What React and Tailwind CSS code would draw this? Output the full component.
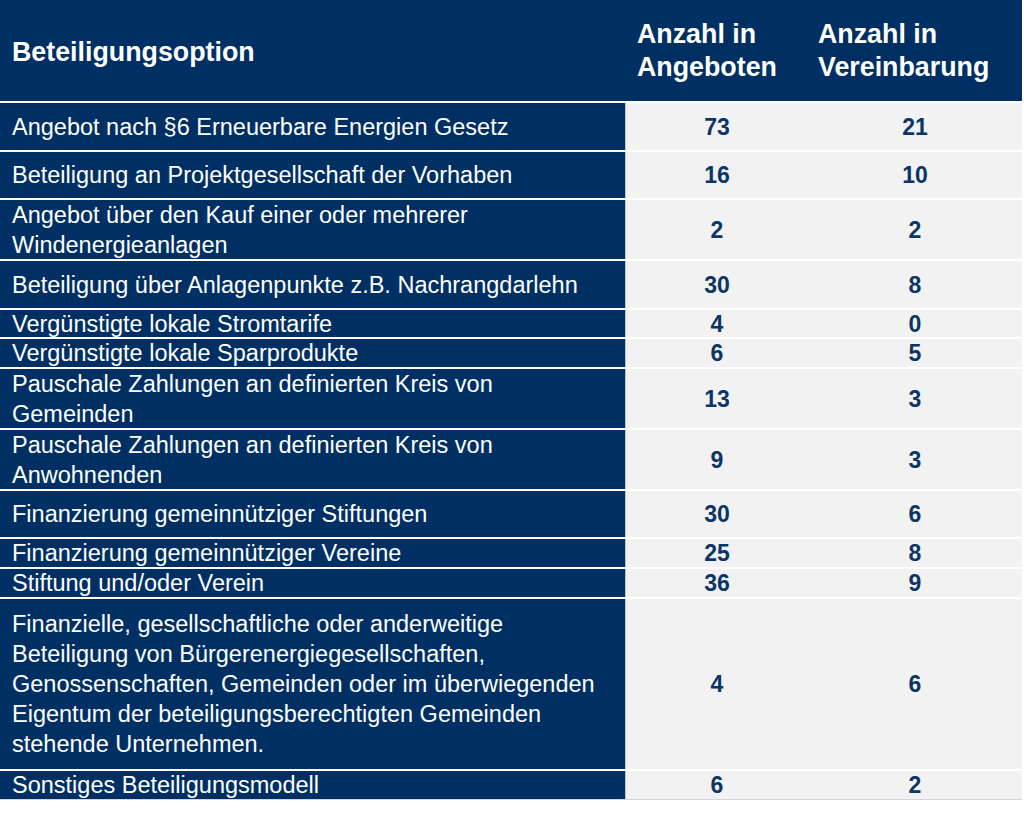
const rows = [
  { label: ['Angebot nach §6 Erneuerbare Energien Gesetz'], a: 73, b: 21, h: 'h-[49px]' },
  { label: ['Beteiligung an Projektgesellschaft der Vorhaben'], a: 16, b: 10, h: 'h-[48px]' },
  { label: ['Angebot über den Kauf einer oder mehrerer', 'Windenergieanlagen'], a: 2, b: 2, h: 'h-[61px]' },
  { label: ['Beteiligung über Anlagenpunkte z.B. Nachrangdarlehn'], a: 30, b: 8, h: 'h-[49px]' },
  { label: ['Vergünstigte lokale Stromtarife'], a: 4, b: 0, h: 'h-[29px]' },
  { label: ['Vergünstigte lokale Sparprodukte'], a: 6, b: 5, h: 'h-[30px]' },
  { label: ['Pauschale Zahlungen an definierten Kreis von', 'Gemeinden'], a: 13, b: 3, h: 'h-[61px]' },
  { label: ['Pauschale Zahlungen an definierten Kreis von', 'Anwohnenden'], a: 9, b: 3, h: 'h-[61px]' },
  { label: ['Finanzierung gemeinnütziger Stiftungen'], a: 30, b: 6, h: 'h-[48px]' },
  { label: ['Finanzierung gemeinnütziger Vereine'], a: 25, b: 8, h: 'h-[30px]' },
  { label: ['Stiftung und/oder Verein'], a: 36, b: 9, h: 'h-[30px]' },
  {
    label: [
      'Finanzielle, gesellschaftliche oder anderweitige',
      'Beteiligung von Bürgerenergiegesellschaften,',
      'Genossenschaften, Gemeinden oder im überwiegenden',
      'Eigentum der beteiligungsberechtigten Gemeinden',
      'stehende Unternehmen.',
    ],
    a: 4,
    b: 6,
    h: 'h-[172px]',
  },
  { label: ['Sonstiges Beteiligungsmodell'], a: 6, b: 2, h: 'h-[30px]' },
];

export default function App() {
  return (
    <div className="min-h-[813px] bg-white font-['Liberation_Sans',Arial,sans-serif]">
      <div className="w-[1022px]">
        {/* header */}
        <div className="flex h-[101px] bg-[#003063] text-white font-bold text-[26.8px] leading-[33px]">
          <div className="w-[626px] flex items-center pl-[12px] pt-[3px]">Beteiligungsoption</div>
          <div className="w-[182px] flex items-center pl-[11px] pt-[1px]">
            <div>
              Anzahl in
              <br />
              Angeboten
            </div>
          </div>
          <div className="w-[214px] flex items-center pl-[10px] pt-[1px]">
            <div>
              Anzahl in
              <br />
              Vereinbarung
            </div>
          </div>
        </div>

        {rows.map((r, i) => (
          <div key={i} className={`flex border-t-2 border-white ${r.h}`}>
            <div className="w-[626px] shrink-0 flex items-center pl-[12px] bg-[#003063] border-r border-[#b9c6d6] text-white text-[23.5px] leading-[30px]">
              <div>
                {r.label.map((l, j) => (
                  <div key={j}>{l}</div>
                ))}
              </div>
            </div>
            <div className="w-[182px] shrink-0 flex items-center justify-center bg-[#f2f2f2] text-[#0b3566] font-bold text-[23px] leading-[30px]">
              {r.a}
            </div>
            <div className="w-[214px] shrink-0 flex items-center justify-center bg-[#f2f2f2] text-[#0b3566] font-bold text-[23px] leading-[30px]">
              {r.b}
            </div>
          </div>
        ))}
        <div className="h-px bg-[#cfd6de]" />
      </div>
    </div>
  );
}
